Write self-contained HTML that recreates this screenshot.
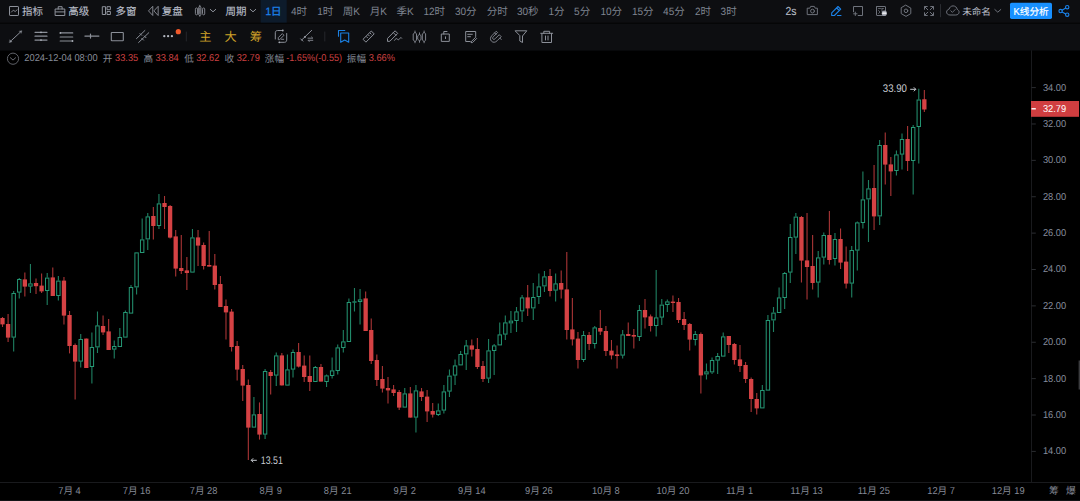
<!DOCTYPE html>
<html lang="zh-CN">
<head>
<meta charset="utf-8">
<title>K线分析</title>
<style>
*{box-sizing:border-box;margin:0;padding:0}
html,body{width:1080px;height:501px;overflow:hidden;background:#000}
body{position:relative;font-family:"Liberation Sans","Noto Sans CJK SC",sans-serif;font-size:10.5px;color:#7c818d}
svg{position:absolute;left:0;top:0}
svg text{font-family:"Liberation Sans","Noto Sans CJK SC",sans-serif;text-rendering:geometricPrecision}
.ax{fill:#868d9e}
.axx{fill:#858a96}
.mk{fill:#c9ccd3}
.pw{fill:#fff}
.tb{fill:#b9bec9;stroke:#b9bec9;stroke-width:.12}
.tf{fill:#7f8490}
.tn{fill:#b9bec9}
.tbl{fill:#1b80e8;stroke:#1b80e8;stroke-width:.3}
.tw{fill:#fff;stroke:#fff;stroke-width:.2}
.gold{fill:#cfa128}
.il{fill:#878c98}
.ir{fill:#cb4042}
.rw{stroke:#d54244;stroke-width:1.1;opacity:.8;fill:none}
.rb{fill:#d54244}
.gw{stroke:#27a07b;stroke-width:1.1;opacity:.8;fill:none}
.gb{fill:none;stroke:#27a07b;stroke-width:1;opacity:.95}
.gf{fill:#27a07b}
</style>
</head>
<body>
<svg id="chart" width="1080" height="501" viewBox="0 0 1080 501">
<rect x="0" y="0" width="1080" height="50.6" fill="#0d0e11"/>
<rect x="0" y="22.7" width="1080" height="1.1" fill="#040506"/>
<rect x="260.7" y="0" width="26" height="22.6" fill="#0d1b2b"/>
<rect x="1010" y="2.8" width="42" height="16.1" rx="1.6" fill="#1890ff"/>
<g id="tbtext" opacity=".999">
<text class="tb" x="22" y="14.9" font-size="10.5">指标</text>
<text class="tb" x="68.3" y="14.9" font-size="10.5">高级</text>
<text class="tb" x="115.4" y="14.9" font-size="10.5">多窗</text>
<text class="tb" x="161.8" y="14.9" font-size="10.5">复盘</text>
<text class="tb" x="225.4" y="14.9" font-size="10.5">周期</text>
<text class="tbl" x="265.4" y="14.9" font-size="10.6" xml:space="preserve"><tspan textLength="5.6" lengthAdjust="spacingAndGlyphs">1</tspan><tspan font-size="10.5">日</tspan></text>
<text class="tf" x="290.9" y="14.9" font-size="10.6" xml:space="preserve"><tspan textLength="5.6" lengthAdjust="spacingAndGlyphs">4</tspan><tspan font-size="10.5">时</tspan></text>
<text class="tf" x="317.2" y="14.9" font-size="10.6" xml:space="preserve"><tspan textLength="5.6" lengthAdjust="spacingAndGlyphs">1</tspan><tspan font-size="10.5">时</tspan></text>
<text class="tf" x="342.7" y="14.9" font-size="10.6" xml:space="preserve"><tspan font-size="10.5">周</tspan><tspan textLength="6.72" lengthAdjust="spacingAndGlyphs">K</tspan></text>
<text class="tf" x="369.7" y="14.9" font-size="10.6" xml:space="preserve"><tspan font-size="10.5">月</tspan><tspan textLength="6.72" lengthAdjust="spacingAndGlyphs">K</tspan></text>
<text class="tf" x="396.4" y="14.9" font-size="10.6" xml:space="preserve"><tspan font-size="10.5">季</tspan><tspan textLength="6.72" lengthAdjust="spacingAndGlyphs">K</tspan></text>
<text class="tf" x="423.4" y="14.9" font-size="10.6" xml:space="preserve"><tspan textLength="11.2" lengthAdjust="spacingAndGlyphs">12</tspan><tspan font-size="10.5">时</tspan></text>
<text class="tf" x="454.9" y="14.9" font-size="10.6" xml:space="preserve"><tspan textLength="11.2" lengthAdjust="spacingAndGlyphs">30</tspan><tspan font-size="10.5">分</tspan></text>
<text class="tf" x="486.7" y="14.9" font-size="10.5">分时</text>
<text class="tf" x="516.9" y="14.9" font-size="10.6" xml:space="preserve"><tspan textLength="11.2" lengthAdjust="spacingAndGlyphs">30</tspan><tspan font-size="10.5">秒</tspan></text>
<text class="tf" x="548.4" y="14.9" font-size="10.6" xml:space="preserve"><tspan textLength="5.6" lengthAdjust="spacingAndGlyphs">1</tspan><tspan font-size="10.5">分</tspan></text>
<text class="tf" x="574.1" y="14.9" font-size="10.6" xml:space="preserve"><tspan textLength="5.6" lengthAdjust="spacingAndGlyphs">5</tspan><tspan font-size="10.5">分</tspan></text>
<text class="tf" x="600.4" y="14.9" font-size="10.6" xml:space="preserve"><tspan textLength="11.2" lengthAdjust="spacingAndGlyphs">10</tspan><tspan font-size="10.5">分</tspan></text>
<text class="tf" x="631.9" y="14.9" font-size="10.6" xml:space="preserve"><tspan textLength="11.2" lengthAdjust="spacingAndGlyphs">15</tspan><tspan font-size="10.5">分</tspan></text>
<text class="tf" x="663.1" y="14.9" font-size="10.6" xml:space="preserve"><tspan textLength="11.2" lengthAdjust="spacingAndGlyphs">45</tspan><tspan font-size="10.5">分</tspan></text>
<text class="tf" x="694.9" y="14.9" font-size="10.6" xml:space="preserve"><tspan textLength="5.6" lengthAdjust="spacingAndGlyphs">2</tspan><tspan font-size="10.5">时</tspan></text>
<text class="tf" x="720.6" y="14.9" font-size="10.6" xml:space="preserve"><tspan textLength="5.6" lengthAdjust="spacingAndGlyphs">3</tspan><tspan font-size="10.5">时</tspan></text>
<text class="tb" x="785.5" y="15.1" font-size="11.6" textLength="11.03" lengthAdjust="spacingAndGlyphs">2s</text>
<text class="tn" x="962.2" y="14.7" font-size="9.6">未命名</text>
<text class="tw" x="1013.6" y="14.8" font-size="10.2" xml:space="preserve"><tspan textLength="6.26" lengthAdjust="spacingAndGlyphs">K</tspan><tspan font-size="9.6">线分析</tspan></text>
<text class="gold" x="199.2" y="41.3" font-size="12.2">主</text>
<text class="gold" x="224.5" y="41.3" font-size="12.2">大</text>
<text class="gold" x="249.7" y="41.3" font-size="12.2">筹</text>
</g>
<g id="info" opacity=".999">
<text class="il" x="24.3" y="61.1" font-size="10.0" textLength="73.43" lengthAdjust="spacingAndGlyphs">2024-12-04 08:00</text>
<text class="il" x="102.8" y="61.5" font-size="9.6">开</text>
<text class="ir" x="115" y="61.1" font-size="10.0" textLength="23.27" lengthAdjust="spacingAndGlyphs">33.35</text>
<text class="il" x="143.5" y="61.5" font-size="9.6">高</text>
<text class="ir" x="155.5" y="61.1" font-size="10.0" textLength="23.27" lengthAdjust="spacingAndGlyphs">33.84</text>
<text class="il" x="184.2" y="61.5" font-size="9.6">低</text>
<text class="ir" x="196.2" y="61.1" font-size="10.0" textLength="23.27" lengthAdjust="spacingAndGlyphs">32.62</text>
<text class="il" x="224.5" y="61.5" font-size="9.6">收</text>
<text class="ir" x="236.7" y="61.1" font-size="10.0" textLength="23.27" lengthAdjust="spacingAndGlyphs">32.79</text>
<text class="il" x="264.8" y="61.5" font-size="9.6">涨幅</text>
<text class="ir" x="286.2" y="61.1" font-size="10.0" textLength="55.94" lengthAdjust="spacingAndGlyphs">-1.65%(-0.55)</text>
<text class="il" x="346.8" y="61.5" font-size="9.6">振幅</text>
<text class="ir" x="368.7" y="61.1" font-size="10.0" textLength="26.37" lengthAdjust="spacingAndGlyphs">3.66%</text>
</g>
<g id="candles">
<path class="rw" d="M2.5 317V327"/>
<rect class="rb" x="0.35" y="318" width="4.3" height="6.4"/>
<path class="rw" d="M8.09 314V342"/>
<rect class="rb" x="5.94" y="324" width="4.3" height="13.6"/>
<path class="gw" d="M13.67 291V293M13.67 337.6V351.6"/>
<rect class="gb" x="11.97" y="293.5" width="3.4" height="43.6"/>
<path class="gw" d="M19.26 278V279M19.26 292.6V298.4"/>
<rect class="gb" x="17.56" y="279.5" width="3.4" height="12.6"/>
<path class="rw" d="M24.85 272.4V296.6"/>
<rect class="rb" x="22.7" y="279.4" width="4.3" height="7.2"/>
<path class="gw" d="M30.43 264V283.4M30.43 286.6V293"/>
<rect class="gb" x="28.73" y="283.9" width="3.4" height="2.2"/>
<path class="rw" d="M36.02 278.6V294"/>
<rect class="rb" x="33.87" y="283" width="4.3" height="3.2"/>
<path class="rw" d="M41.61 273.6V293"/>
<rect class="rb" x="39.46" y="285.6" width="4.3" height="5.8"/>
<path class="gw" d="M47.2 273V277.6M47.2 291V305"/>
<rect class="gb" x="45.5" y="278.1" width="3.4" height="12.4"/>
<path class="rw" d="M52.78 267.4V296"/>
<rect class="rb" x="50.63" y="277.4" width="4.3" height="18.6"/>
<path class="gw" d="M58.37 276V280.6M58.37 296V300.4"/>
<rect class="gb" x="56.67" y="281.1" width="3.4" height="14.4"/>
<path class="rw" d="M63.96 277V324.6"/>
<rect class="rb" x="61.81" y="280.6" width="4.3" height="35"/>
<path class="rw" d="M69.54 311V353.4"/>
<rect class="rb" x="67.39" y="315" width="4.3" height="31"/>
<path class="rw" d="M75.13 343.6V399.6"/>
<rect class="rb" x="72.98" y="345" width="4.3" height="16.6"/>
<path class="gw" d="M80.72 334V339M80.72 361.6V367.6"/>
<rect class="gb" x="79.02" y="339.5" width="3.4" height="21.6"/>
<path class="rw" d="M86.3 338.6V368"/>
<rect class="rb" x="84.15" y="338.6" width="4.3" height="29.4"/>
<path class="gw" d="M91.89 332.6V347M91.89 367V383.4"/>
<rect class="gb" x="90.19" y="347.5" width="3.4" height="19"/>
<path class="gw" d="M97.48 311.4V325.4M97.48 347.4V353"/>
<rect class="gb" x="95.78" y="325.9" width="3.4" height="21"/>
<path class="rw" d="M103.07 315.6V335"/>
<rect class="rb" x="100.92" y="326" width="4.3" height="6.4"/>
<path class="rw" d="M108.65 319V350"/>
<rect class="rb" x="106.5" y="331.4" width="4.3" height="18.6"/>
<path class="gw" d="M114.24 340.4V346M114.24 349.6V358.4"/>
<rect class="gb" x="112.54" y="346.5" width="3.4" height="2.6"/>
<path class="gw" d="M119.83 328V337"/>
<rect class="gb" x="118.13" y="337.5" width="3.4" height="9"/>
<path class="gw" d="M125.41 310.6V312"/>
<rect class="gb" x="123.71" y="312.5" width="3.4" height="24.6"/>
<path class="gw" d="M131 285V287"/>
<rect class="gb" x="129.3" y="287.5" width="3.4" height="25.6"/>
<path class="gw" d="M136.59 287.4V294.4"/>
<rect class="gb" x="134.89" y="252.9" width="3.4" height="34"/>
<path class="gw" d="M142.17 218.6V239.4"/>
<rect class="gb" x="140.47" y="239.9" width="3.4" height="12.6"/>
<path class="gw" d="M147.76 213V216.4M147.76 239.4V250"/>
<rect class="gb" x="146.06" y="216.9" width="3.4" height="22"/>
<path class="rw" d="M153.35 207V239.6"/>
<rect class="rb" x="151.2" y="216" width="4.3" height="10"/>
<path class="gw" d="M158.94 194V203.4M158.94 226V229"/>
<rect class="gb" x="157.24" y="203.9" width="3.4" height="21.6"/>
<path class="rw" d="M164.52 196V229"/>
<rect class="rb" x="162.37" y="203" width="4.3" height="4"/>
<path class="rw" d="M170.11 205V238.4"/>
<rect class="rb" x="167.96" y="206" width="4.3" height="31.6"/>
<path class="rw" d="M175.7 230V276.6"/>
<rect class="rb" x="173.55" y="236.4" width="4.3" height="32.2"/>
<path class="rw" d="M181.28 235V274"/>
<rect class="rb" x="179.13" y="268" width="4.3" height="3"/>
<path class="rw" d="M186.87 257V290"/>
<rect class="rb" x="184.72" y="270.4" width="4.3" height="2.6"/>
<path class="gw" d="M192.46 229V237.4"/>
<rect class="gb" x="190.76" y="237.9" width="3.4" height="34.2"/>
<path class="rw" d="M198.04 230V266"/>
<rect class="rb" x="195.89" y="237.4" width="4.3" height="8.2"/>
<path class="rw" d="M203.63 242.4V269.6"/>
<rect class="rb" x="201.48" y="245" width="4.3" height="21"/>
<path class="rw" d="M209.22 231V266.6"/>
<rect class="rb" x="207.07" y="265" width="4.3" height="1.6"/>
<path class="rw" d="M214.81 254V289.6"/>
<rect class="rb" x="212.66" y="265.6" width="4.3" height="19.4"/>
<path class="rw" d="M220.39 276V307"/>
<rect class="rb" x="218.24" y="284" width="4.3" height="23"/>
<path class="rw" d="M225.98 299.4V339.6"/>
<rect class="rb" x="223.83" y="306" width="4.3" height="6.4"/>
<path class="rw" d="M231.57 309V351.6"/>
<rect class="rb" x="229.42" y="311.6" width="4.3" height="35.4"/>
<path class="rw" d="M237.15 341V380.6"/>
<rect class="rb" x="235" y="346" width="4.3" height="23.6"/>
<path class="rw" d="M242.74 365V401"/>
<rect class="rb" x="240.59" y="369" width="4.3" height="16.6"/>
<path class="rw" d="M248.33 379.4V460"/>
<rect class="rb" x="246.18" y="385" width="4.3" height="42.6"/>
<path class="gw" d="M253.91 397V414.4"/>
<rect class="gb" x="252.21" y="414.9" width="3.4" height="12.2"/>
<path class="rw" d="M259.5 402.4V439.6"/>
<rect class="rb" x="257.35" y="414" width="4.3" height="20.6"/>
<path class="gw" d="M265.09 369V371M265.09 434.6V439"/>
<rect class="gb" x="263.39" y="371.5" width="3.4" height="62.6"/>
<path class="rw" d="M270.68 370V394.6"/>
<rect class="rb" x="268.53" y="372" width="4.3" height="4"/>
<path class="gw" d="M276.26 352.4V355.4M276.26 375.6V386"/>
<rect class="gb" x="274.56" y="355.9" width="3.4" height="19.2"/>
<path class="rw" d="M281.85 353V385.4"/>
<rect class="rb" x="279.7" y="355.4" width="4.3" height="30"/>
<path class="gw" d="M287.44 354.4V369.4"/>
<rect class="gb" x="285.74" y="369.9" width="3.4" height="15.2"/>
<path class="gw" d="M293.02 349.4V352M293.02 369.6V377.4"/>
<rect class="gb" x="291.32" y="352.5" width="3.4" height="16.6"/>
<path class="rw" d="M298.61 343V367.6"/>
<rect class="rb" x="296.46" y="352" width="4.3" height="14.6"/>
<path class="rw" d="M304.2 355.4V382"/>
<rect class="rb" x="302.05" y="365.6" width="4.3" height="11.4"/>
<path class="rw" d="M309.78 355.4V391"/>
<rect class="rb" x="307.63" y="376" width="4.3" height="6"/>
<path class="gw" d="M315.37 366V367"/>
<rect class="gb" x="313.67" y="367.5" width="3.4" height="14"/>
<path class="rw" d="M320.96 364V381.6"/>
<rect class="rb" x="318.81" y="367" width="4.3" height="14.6"/>
<path class="gw" d="M326.55 374.4V375.4M326.55 382V387"/>
<rect class="gb" x="324.85" y="375.9" width="3.4" height="5.6"/>
<path class="gw" d="M332.13 357.4V370.4M332.13 376V378.4"/>
<rect class="gb" x="330.43" y="370.9" width="3.4" height="4.6"/>
<path class="gw" d="M337.72 344.4V347.4M337.72 371V374.4"/>
<rect class="gb" x="336.02" y="347.9" width="3.4" height="22.6"/>
<path class="gw" d="M343.31 330V341.4M343.31 348V352.6"/>
<rect class="gb" x="341.61" y="341.9" width="3.4" height="5.6"/>
<path class="gw" d="M348.89 298.6V302"/>
<rect class="gb" x="347.19" y="302.5" width="3.4" height="39"/>
<path class="gw" d="M354.48 288V301.4M354.48 302.6V311.4"/>
<rect class="gf" x="352.33" y="301.4" width="4.3" height="1.2"/>
<path class="gw" d="M360.07 289V299.4M360.07 302V324.4"/>
<rect class="gb" x="358.37" y="299.9" width="3.4" height="1.6"/>
<path class="rw" d="M365.65 291.6V331"/>
<rect class="rb" x="363.5" y="298.4" width="4.3" height="32.6"/>
<path class="rw" d="M371.24 318.4V364"/>
<rect class="rb" x="369.09" y="330" width="4.3" height="31"/>
<path class="rw" d="M376.83 354.4V386"/>
<rect class="rb" x="374.68" y="360" width="4.3" height="20"/>
<path class="rw" d="M382.42 366V392.4"/>
<rect class="rb" x="380.27" y="379" width="4.3" height="9.6"/>
<path class="rw" d="M388 377V403.6"/>
<rect class="rb" x="385.85" y="388" width="4.3" height="2.4"/>
<path class="rw" d="M393.59 385V396"/>
<rect class="rb" x="391.44" y="389.4" width="4.3" height="3.6"/>
<path class="rw" d="M399.18 390V410"/>
<rect class="rb" x="397.03" y="392" width="4.3" height="15.6"/>
<path class="gw" d="M404.76 388V393.4"/>
<rect class="gb" x="403.06" y="393.9" width="3.4" height="13.2"/>
<path class="rw" d="M410.35 387V417.6"/>
<rect class="rb" x="408.2" y="393.4" width="4.3" height="24.2"/>
<path class="gw" d="M415.94 385V390.4M415.94 417.6V432.4"/>
<rect class="gb" x="414.24" y="390.9" width="3.4" height="26.2"/>
<path class="rw" d="M421.52 388V401"/>
<rect class="rb" x="419.38" y="391.4" width="4.3" height="5.6"/>
<path class="rw" d="M427.11 390V422"/>
<rect class="rb" x="424.96" y="396.6" width="4.3" height="14.8"/>
<path class="rw" d="M432.7 403V417.6"/>
<rect class="rb" x="430.55" y="411" width="4.3" height="3.6"/>
<path class="gw" d="M438.29 403.4V410.4M438.29 415V416"/>
<rect class="gb" x="436.59" y="410.9" width="3.4" height="3.6"/>
<path class="gw" d="M443.87 385V391.4M443.87 410.6V413.6"/>
<rect class="gb" x="442.17" y="391.9" width="3.4" height="18.2"/>
<path class="gw" d="M449.46 369.4V375.6M449.46 391.6V397"/>
<rect class="gb" x="447.76" y="376.1" width="3.4" height="15"/>
<path class="gw" d="M455.05 359.4V365.4M455.05 375.6V385"/>
<rect class="gb" x="453.35" y="365.9" width="3.4" height="9.2"/>
<path class="gw" d="M460.63 351V354"/>
<rect class="gb" x="458.93" y="354.5" width="3.4" height="10.4"/>
<path class="gw" d="M466.22 340V345.4M466.22 354.4V370"/>
<rect class="gb" x="464.52" y="345.9" width="3.4" height="8"/>
<path class="rw" d="M471.81 339.4V356.4"/>
<rect class="rb" x="469.66" y="345.4" width="4.3" height="4.2"/>
<path class="rw" d="M477.39 338V369"/>
<rect class="rb" x="475.25" y="349" width="4.3" height="18"/>
<path class="rw" d="M482.98 361V382"/>
<rect class="rb" x="480.83" y="366" width="4.3" height="13"/>
<path class="gw" d="M488.57 339V350.4M488.57 378.6V383"/>
<rect class="gb" x="486.87" y="350.9" width="3.4" height="27.2"/>
<path class="gw" d="M494.16 344V345.4M494.16 351V375"/>
<rect class="gb" x="492.46" y="345.9" width="3.4" height="4.6"/>
<path class="gw" d="M499.74 322.4V334.4"/>
<rect class="gb" x="498.04" y="334.9" width="3.4" height="10"/>
<path class="gw" d="M505.33 315.4V322.4M505.33 334.6V340"/>
<rect class="gb" x="503.63" y="322.9" width="3.4" height="11.2"/>
<path class="gw" d="M510.92 311V320.6M510.92 323.4V333"/>
<rect class="gb" x="509.22" y="321.1" width="3.4" height="1.8"/>
<path class="gw" d="M516.5 307V311.4M516.5 321V332"/>
<rect class="gb" x="514.8" y="311.9" width="3.4" height="8.6"/>
<path class="gw" d="M522.09 295V297.4M522.09 311.4V322"/>
<rect class="gb" x="520.39" y="297.9" width="3.4" height="13"/>
<path class="rw" d="M527.68 285V316"/>
<rect class="rb" x="525.53" y="297.4" width="4.3" height="11"/>
<path class="gw" d="M533.26 283V297M533.26 308.4V320"/>
<rect class="gb" x="531.57" y="297.5" width="3.4" height="10.4"/>
<path class="gw" d="M538.85 273.4V286.4M538.85 297V304"/>
<rect class="gb" x="537.15" y="286.9" width="3.4" height="9.6"/>
<path class="gw" d="M544.44 271V276.4M544.44 286.4V292"/>
<rect class="gb" x="542.74" y="276.9" width="3.4" height="9"/>
<path class="rw" d="M550.03 269V296.6"/>
<rect class="rb" x="547.88" y="276" width="4.3" height="15"/>
<path class="gw" d="M555.61 273.4V283.4M555.61 290.6V301.6"/>
<rect class="gb" x="553.91" y="283.9" width="3.4" height="6.2"/>
<path class="rw" d="M561.2 270.6V298.6"/>
<rect class="rb" x="559.05" y="283" width="4.3" height="6.6"/>
<path class="rw" d="M566.79 252V339.4"/>
<rect class="rb" x="564.64" y="289.4" width="4.3" height="40.6"/>
<path class="rw" d="M572.37 298V345.4"/>
<rect class="rb" x="570.22" y="329.4" width="4.3" height="10"/>
<path class="rw" d="M577.96 332V368.6"/>
<rect class="rb" x="575.81" y="338.6" width="4.3" height="21.4"/>
<path class="gw" d="M583.55 331V335M583.55 360V362"/>
<rect class="gb" x="581.85" y="335.5" width="3.4" height="24"/>
<path class="rw" d="M589.13 332V350"/>
<rect class="rb" x="586.99" y="335" width="4.3" height="9"/>
<path class="gw" d="M594.72 326V327.4M594.72 344V348.4"/>
<rect class="gb" x="593.02" y="327.9" width="3.4" height="15.6"/>
<path class="rw" d="M600.31 310V335"/>
<rect class="rb" x="598.16" y="328" width="4.3" height="3.6"/>
<path class="rw" d="M605.9 326V356"/>
<rect class="rb" x="603.75" y="331" width="4.3" height="20"/>
<path class="rw" d="M611.48 340V359.4"/>
<rect class="rb" x="609.33" y="350.6" width="4.3" height="4.8"/>
<path class="rw" d="M617.07 345.4V368.4"/>
<rect class="rb" x="614.92" y="354.4" width="4.3" height="1.6"/>
<path class="gw" d="M622.66 330V334.4M622.66 355.6V358.6"/>
<rect class="gb" x="620.96" y="334.9" width="3.4" height="20.2"/>
<path class="rw" d="M628.24 322.6V336"/>
<rect class="rb" x="626.09" y="334" width="4.3" height="2"/>
<path class="rw" d="M633.83 329V348.4"/>
<rect class="rb" x="631.68" y="335" width="4.3" height="1.6"/>
<path class="gw" d="M639.42 305V310M639.42 337V341"/>
<rect class="gb" x="637.72" y="310.5" width="3.4" height="26"/>
<path class="rw" d="M645 299V328.6"/>
<rect class="rb" x="642.86" y="310" width="4.3" height="7.4"/>
<path class="rw" d="M650.59 314.4V331.6"/>
<rect class="rb" x="648.44" y="316.4" width="4.3" height="9.6"/>
<path class="gw" d="M656.18 270V317.4M656.18 326V336.4"/>
<rect class="gb" x="654.48" y="317.9" width="3.4" height="7.6"/>
<path class="gw" d="M661.77 299V304.6M661.77 317.6V325"/>
<rect class="gb" x="660.07" y="305.1" width="3.4" height="12"/>
<path class="gw" d="M667.35 299.4V301.4M667.35 305V312"/>
<rect class="gb" x="665.65" y="301.9" width="3.4" height="2.6"/>
<path class="rw" d="M672.94 295.6V312"/>
<rect class="rb" x="670.79" y="301.6" width="4.3" height="1.4"/>
<path class="rw" d="M678.53 298V323"/>
<rect class="rb" x="676.38" y="302" width="4.3" height="18"/>
<path class="rw" d="M684.11 312V330"/>
<rect class="rb" x="681.96" y="319" width="4.3" height="6"/>
<path class="rw" d="M689.7 323V350.4"/>
<rect class="rb" x="687.55" y="324" width="4.3" height="15.6"/>
<path class="gw" d="M695.29 331V334M695.29 340V345.4"/>
<rect class="gb" x="693.59" y="334.5" width="3.4" height="5"/>
<path class="rw" d="M700.88 332.4V393.6"/>
<rect class="rb" x="698.73" y="334" width="4.3" height="41.4"/>
<path class="gw" d="M706.46 363.4V371.4M706.46 374.4V379.6"/>
<rect class="gb" x="704.76" y="371.9" width="3.4" height="2"/>
<path class="gw" d="M712.05 357.4V360M712.05 372.4V374"/>
<rect class="gb" x="710.35" y="360.5" width="3.4" height="11.4"/>
<path class="gw" d="M717.64 353V356M717.64 360.6V374"/>
<rect class="gb" x="715.94" y="356.5" width="3.4" height="3.6"/>
<path class="gw" d="M723.22 332.6V336.4"/>
<rect class="gb" x="721.52" y="336.9" width="3.4" height="19.2"/>
<path class="rw" d="M728.81 336V353"/>
<rect class="rb" x="726.66" y="336" width="4.3" height="9"/>
<path class="rw" d="M734.4 343V364.6"/>
<rect class="rb" x="732.25" y="344" width="4.3" height="16"/>
<path class="rw" d="M739.98 345V372"/>
<rect class="rb" x="737.83" y="359.4" width="4.3" height="6.6"/>
<path class="rw" d="M745.57 362V383"/>
<rect class="rb" x="743.42" y="365" width="4.3" height="14"/>
<path class="rw" d="M751.16 377.4V412"/>
<rect class="rb" x="749.01" y="379" width="4.3" height="20"/>
<path class="rw" d="M756.75 393V414.4"/>
<rect class="rb" x="754.6" y="399" width="4.3" height="9.4"/>
<path class="gw" d="M762.33 385V390"/>
<rect class="gb" x="760.63" y="390.5" width="3.4" height="17.4"/>
<path class="gw" d="M767.92 315V320"/>
<rect class="gb" x="766.22" y="320.5" width="3.4" height="69.6"/>
<path class="gw" d="M773.51 307V312.6M773.51 320.4V332"/>
<rect class="gb" x="771.81" y="313.1" width="3.4" height="6.8"/>
<path class="gw" d="M779.09 287.4V297.4"/>
<rect class="gb" x="777.39" y="297.9" width="3.4" height="14.6"/>
<path class="gw" d="M784.68 272V273M784.68 298V309"/>
<rect class="gb" x="782.98" y="273.5" width="3.4" height="24"/>
<path class="gw" d="M790.27 224V237M790.27 272.6V283"/>
<rect class="gb" x="788.57" y="237.5" width="3.4" height="34.6"/>
<path class="gw" d="M795.85 213V216.6M795.85 237.6V254"/>
<rect class="gb" x="794.15" y="217.1" width="3.4" height="20"/>
<path class="rw" d="M801.44 216V282.6"/>
<rect class="rb" x="799.29" y="217" width="4.3" height="43.6"/>
<path class="rw" d="M807.03 213V299.6"/>
<rect class="rb" x="804.88" y="260.4" width="4.3" height="6.6"/>
<path class="rw" d="M812.62 235V289.4"/>
<rect class="rb" x="810.47" y="266" width="4.3" height="17"/>
<path class="gw" d="M818.2 251V257.4M818.2 282.6V297.4"/>
<rect class="gb" x="816.5" y="257.9" width="3.4" height="24.2"/>
<path class="gw" d="M823.79 232.4V235M823.79 257.6V264.4"/>
<rect class="gb" x="822.09" y="235.5" width="3.4" height="21.6"/>
<path class="rw" d="M829.38 211V264.4"/>
<rect class="rb" x="827.23" y="235" width="4.3" height="25"/>
<path class="gw" d="M834.96 233V239M834.96 259V265.6"/>
<rect class="gb" x="833.26" y="239.5" width="3.4" height="19"/>
<path class="rw" d="M840.55 228.6V269"/>
<rect class="rb" x="838.4" y="239" width="4.3" height="23.6"/>
<path class="rw" d="M846.14 246.4V288.6"/>
<rect class="rb" x="843.99" y="261.6" width="4.3" height="22"/>
<path class="gw" d="M851.72 246V250M851.72 283.6V297.4"/>
<rect class="gb" x="850.02" y="250.5" width="3.4" height="32.6"/>
<path class="gw" d="M857.31 221.4V222.4M857.31 250.6V270.4"/>
<rect class="gb" x="855.61" y="222.9" width="3.4" height="27.2"/>
<path class="gw" d="M862.9 171.4V199.4M862.9 223V228.6"/>
<rect class="gb" x="861.2" y="199.9" width="3.4" height="22.6"/>
<path class="gw" d="M868.49 180V188.4M868.49 199.4V242"/>
<rect class="gb" x="866.79" y="188.9" width="3.4" height="10"/>
<path class="rw" d="M874.07 165V230"/>
<rect class="rb" x="871.92" y="188" width="4.3" height="28.4"/>
<path class="gw" d="M879.66 140V145M879.66 216.4V225"/>
<rect class="gb" x="877.96" y="145.5" width="3.4" height="70.4"/>
<path class="rw" d="M885.25 132.4V184.4"/>
<rect class="rb" x="883.1" y="145" width="4.3" height="19.6"/>
<path class="rw" d="M890.83 157V196"/>
<rect class="rb" x="888.68" y="164.4" width="4.3" height="7"/>
<path class="gw" d="M896.42 150.4V154.4M896.42 171V175.6"/>
<rect class="gb" x="894.72" y="154.9" width="3.4" height="15.6"/>
<path class="gw" d="M902.01 133.4V139M902.01 154.6V169.4"/>
<rect class="gb" x="900.31" y="139.5" width="3.4" height="14.6"/>
<path class="rw" d="M907.59 126V171"/>
<rect class="rb" x="905.44" y="139" width="4.3" height="22"/>
<path class="gw" d="M913.18 125V127M913.18 161V194.4"/>
<rect class="gb" x="911.48" y="127.5" width="3.4" height="33"/>
<path class="gw" d="M918.77 88.75V99.5M918.77 127V163.4"/>
<rect class="gb" x="917.07" y="100" width="3.4" height="26.5"/>
<path class="rw" d="M924.35 90V112"/>
<rect class="rb" x="922.2" y="99.25" width="4.3" height="10.25"/>
</g>
<path d="M1031.5 50.3V482.5" stroke="#191a1d" stroke-width="1"/>
<path d="M0 482.5H1080" stroke="#191a1d" stroke-width="1"/>
<path d="M0 500.5H1080" stroke="#131416" stroke-width="1"/>
<g id="yaxis" opacity=".999">
<path d="M1031.5 87.6h4.3" stroke="#2b2d31" stroke-width="1"/>
<text class="ax" x="1042.9" y="90.5" font-size="10.0" textLength="23.27" lengthAdjust="spacingAndGlyphs">34.00</text>
<path d="M1031.5 123.98h4.3" stroke="#2b2d31" stroke-width="1"/>
<text class="ax" x="1042.9" y="126.88" font-size="10.0" textLength="23.27" lengthAdjust="spacingAndGlyphs">32.00</text>
<path d="M1031.5 160.36h4.3" stroke="#2b2d31" stroke-width="1"/>
<text class="ax" x="1042.9" y="163.26" font-size="10.0" textLength="23.27" lengthAdjust="spacingAndGlyphs">30.00</text>
<path d="M1031.5 196.74h4.3" stroke="#2b2d31" stroke-width="1"/>
<text class="ax" x="1042.9" y="199.64" font-size="10.0" textLength="23.27" lengthAdjust="spacingAndGlyphs">28.00</text>
<path d="M1031.5 233.12h4.3" stroke="#2b2d31" stroke-width="1"/>
<text class="ax" x="1042.9" y="236.02" font-size="10.0" textLength="23.27" lengthAdjust="spacingAndGlyphs">26.00</text>
<path d="M1031.5 269.5h4.3" stroke="#2b2d31" stroke-width="1"/>
<text class="ax" x="1042.9" y="272.4" font-size="10.0" textLength="23.27" lengthAdjust="spacingAndGlyphs">24.00</text>
<path d="M1031.5 305.88h4.3" stroke="#2b2d31" stroke-width="1"/>
<text class="ax" x="1042.9" y="308.78" font-size="10.0" textLength="23.27" lengthAdjust="spacingAndGlyphs">22.00</text>
<path d="M1031.5 342.26h4.3" stroke="#2b2d31" stroke-width="1"/>
<text class="ax" x="1042.9" y="345.16" font-size="10.0" textLength="23.27" lengthAdjust="spacingAndGlyphs">20.00</text>
<path d="M1031.5 378.64h4.3" stroke="#2b2d31" stroke-width="1"/>
<text class="ax" x="1042.9" y="381.54" font-size="10.0" textLength="23.27" lengthAdjust="spacingAndGlyphs">18.00</text>
<path d="M1031.5 415.02h4.3" stroke="#2b2d31" stroke-width="1"/>
<text class="ax" x="1042.9" y="417.92" font-size="10.0" textLength="23.27" lengthAdjust="spacingAndGlyphs">16.00</text>
<path d="M1031.5 451.4h4.3" stroke="#2b2d31" stroke-width="1"/>
<text class="ax" x="1042.9" y="454.3" font-size="10.0" textLength="23.27" lengthAdjust="spacingAndGlyphs">14.00</text>
</g>
<g id="xaxis" opacity=".999">
<text class="axx" x="58.28" y="494.2" font-size="10.0" xml:space="preserve"><tspan textLength="5.17" lengthAdjust="spacingAndGlyphs">7</tspan><tspan font-size="9.6">月</tspan><tspan textLength="7.76" lengthAdjust="spacingAndGlyphs"> 4</tspan></text>
<text class="axx" x="122.74" y="494.2" font-size="10.0" xml:space="preserve"><tspan textLength="5.17" lengthAdjust="spacingAndGlyphs">7</tspan><tspan font-size="9.6">月</tspan><tspan textLength="12.93" lengthAdjust="spacingAndGlyphs"> 16</tspan></text>
<text class="axx" x="189.78" y="494.2" font-size="10.0" xml:space="preserve"><tspan textLength="5.17" lengthAdjust="spacingAndGlyphs">7</tspan><tspan font-size="9.6">月</tspan><tspan textLength="12.93" lengthAdjust="spacingAndGlyphs"> 28</tspan></text>
<text class="axx" x="259.41" y="494.2" font-size="10.0" xml:space="preserve"><tspan textLength="5.17" lengthAdjust="spacingAndGlyphs">8</tspan><tspan font-size="9.6">月</tspan><tspan textLength="7.76" lengthAdjust="spacingAndGlyphs"> 9</tspan></text>
<text class="axx" x="323.87" y="494.2" font-size="10.0" xml:space="preserve"><tspan textLength="5.17" lengthAdjust="spacingAndGlyphs">8</tspan><tspan font-size="9.6">月</tspan><tspan textLength="12.93" lengthAdjust="spacingAndGlyphs"> 21</tspan></text>
<text class="axx" x="393.5" y="494.2" font-size="10.0" xml:space="preserve"><tspan textLength="5.17" lengthAdjust="spacingAndGlyphs">9</tspan><tspan font-size="9.6">月</tspan><tspan textLength="7.76" lengthAdjust="spacingAndGlyphs"> 2</tspan></text>
<text class="axx" x="457.96" y="494.2" font-size="10.0" xml:space="preserve"><tspan textLength="5.17" lengthAdjust="spacingAndGlyphs">9</tspan><tspan font-size="9.6">月</tspan><tspan textLength="12.93" lengthAdjust="spacingAndGlyphs"> 14</tspan></text>
<text class="axx" x="525" y="494.2" font-size="10.0" xml:space="preserve"><tspan textLength="5.17" lengthAdjust="spacingAndGlyphs">9</tspan><tspan font-size="9.6">月</tspan><tspan textLength="12.93" lengthAdjust="spacingAndGlyphs"> 26</tspan></text>
<text class="axx" x="592.05" y="494.2" font-size="10.0" xml:space="preserve"><tspan textLength="10.34" lengthAdjust="spacingAndGlyphs">10</tspan><tspan font-size="9.6">月</tspan><tspan textLength="7.76" lengthAdjust="spacingAndGlyphs"> 8</tspan></text>
<text class="axx" x="656.5" y="494.2" font-size="10.0" xml:space="preserve"><tspan textLength="10.34" lengthAdjust="spacingAndGlyphs">10</tspan><tspan font-size="9.6">月</tspan><tspan textLength="12.93" lengthAdjust="spacingAndGlyphs"> 20</tspan></text>
<text class="axx" x="726.13" y="494.2" font-size="10.0" xml:space="preserve"><tspan textLength="9.65" lengthAdjust="spacingAndGlyphs">11</tspan><tspan font-size="9.6">月</tspan><tspan textLength="7.76" lengthAdjust="spacingAndGlyphs"> 1</tspan></text>
<text class="axx" x="790.59" y="494.2" font-size="10.0" xml:space="preserve"><tspan textLength="9.65" lengthAdjust="spacingAndGlyphs">11</tspan><tspan font-size="9.6">月</tspan><tspan textLength="12.93" lengthAdjust="spacingAndGlyphs"> 13</tspan></text>
<text class="axx" x="857.64" y="494.2" font-size="10.0" xml:space="preserve"><tspan textLength="9.65" lengthAdjust="spacingAndGlyphs">11</tspan><tspan font-size="9.6">月</tspan><tspan textLength="12.93" lengthAdjust="spacingAndGlyphs"> 25</tspan></text>
<text class="axx" x="927.27" y="494.2" font-size="10.0" xml:space="preserve"><tspan textLength="10.34" lengthAdjust="spacingAndGlyphs">12</tspan><tspan font-size="9.6">月</tspan><tspan textLength="7.76" lengthAdjust="spacingAndGlyphs"> 7</tspan></text>
<text class="axx" x="991.72" y="494.2" font-size="10.0" xml:space="preserve"><tspan textLength="10.34" lengthAdjust="spacingAndGlyphs">12</tspan><tspan font-size="9.6">月</tspan><tspan textLength="12.93" lengthAdjust="spacingAndGlyphs"> 19</tspan></text>
<text x="1049" y="494.4" class="axx" font-size="9.8">筹</text>
<text x="1066" y="494.4" class="axx" font-size="9.8">爆</text>
</g>
<rect x="1031" y="101" width="48" height="15.8" fill="#d03e40"/>
<path d="M1031.5 108.8h4.3" stroke="#fff" stroke-width="1.4"/>
<path d="M910.2 89.3h5.6m-2-2l2 2-2 2" stroke="#c9ccd3" stroke-width="1" fill="none"/>
<path d="M256.8 460.3h-5.6m2-2l-2 2 2 2" stroke="#c9ccd3" stroke-width="1" fill="none"/>
<rect x="1078.6" y="360.5" width="1.4" height="29" fill="#3a3b3e"/>
<circle cx="13" cy="58.7" r="5.6" fill="none" stroke="#5f6168" stroke-width="1"/>
<path d="M10.1 57.5l2.9 2.6 2.9-2.6" fill="none" stroke="#6b6d74" stroke-width="1"/>
<g id="marks" opacity=".999">
<text class="mk" x="882.8" y="92.3" font-size="11" textLength="24.09" lengthAdjust="spacingAndGlyphs">33.90</text>
<text class="mk" x="260.8" y="463.9" font-size="11" textLength="22.02" lengthAdjust="spacingAndGlyphs">13.51</text>
<text class="pw" x="1042.9" y="111.9" font-size="10.0" textLength="23.27" lengthAdjust="spacingAndGlyphs">32.79</text>
</g>
</svg>
<svg id="icons" width="1080" height="50" viewBox="0 0 1080 50" style="position:absolute;left:0;top:0" fill="none" stroke-linecap="round" stroke-linejoin="round">
<g stroke="#8d919a" stroke-width="1">
<!-- row1 left -->
<rect x="9.5" y="6.5" width="9" height="9" rx=".6"/>
<path d="M11.4 12.1l1.9-1.9 1.9 1.3 1.9-1.7" stroke-width=".9"/>
<path d="M55.5 9h9.3v6.5h-9.3zM58.2 9V6.7h3.9V9M55.5 11.9h9.3"/>
<path d="M102.7 6.7h2.8v7.8h-2.8zM107.4 6.7h3v3h-3zM107.4 11.5h3v3h-3z"/>
<path d="M152.5 6.6l-4 4.3 4 4.3zM157.9 6.6l-4 4.3 4 4.3z" stroke-width=".9"/>
<path d="M195.4 8.9c0-.5.4-.9.9-.9h.4c.5 0 .9.4.9.9v5c0 .5-.4.9-.9.9h-.4c-.5 0-.9-.4-.9-.9zM198.7 7.3c0-.5.4-.9.9-.9h.4c.5 0 .9.4.9.9v7.2c0 .5-.4.9-.9.9h-.4c-.5 0-.9-.4-.9-.9zM199.8 5.3v1.1M199.8 15.4v.9M199.8 8v5.5M202.5 8.9c0-.5.4-.9.9-.9h.4c.5 0 .9.4.9.9v5c0 .5-.4.9-.9.9h-.4c-.5 0-.9-.4-.9-.9z" stroke-width=".9"/>
<path d="M210.3 9.4l2.7 2.4 2.7-2.4M250.3 9.4l2.7 2.4 2.7-2.4"/>
</g>
<g stroke="#6e727b" stroke-width="1">
<!-- row1 right -->
<path d="M807.6 8.2h2.2l.9-1.8h3.6l.9 1.8h2.2v6.4h-9.8z"/>
<circle cx="812.5" cy="11.1" r="1.9"/>
<path d="M853.5 11.8V6.5h9v9h-4.3M853.6 13.8h3.4M855.3 12.1v3.4"/>
<rect x="876.5" y="6.5" width="9" height="9" rx=".4"/>
<path d="M878.5 8.5h2M882 8.5h1.5M878.5 10.5l1.5 1.5-1.5 1.5M882 8.5v3" stroke-width=".8"/>
<path d="M906 5.3l4.8 2.8v5.5l-4.8 2.8-4.8-2.8V8.1z"/>
<circle cx="906" cy="10.8" r="1.8"/>
<path d="M924.5 9.3V6.5h2.8M924.8 6.8l3 3M933.5 9.3V6.5h-2.8M933.2 6.8l-3 3M924.5 12.7v2.8h2.8M924.8 15.2l3-3M933.5 12.7v2.8h-2.8M933.2 15.2l-3-3"/>
<path d="M949.6 15c-1.7 0-3-1.3-3-2.9 0-1.5 1.1-2.7 2.5-2.9.4-1.9 2-3.3 4-3.3 2.1 0 3.8 1.5 4.1 3.5 1.1.4 1.9 1.5 1.9 2.7 0 1.6-1.3 2.9-2.9 2.9z"/>
<path d="M950.8 10.8l1.6 1.6 2.8-2.9" stroke-width=".9"/>
<path d="M994.8 9.5l3 2.7 3-2.7"/>
</g>
<circle cx="884.3" cy="13.2" r="2.6" fill="#a5a8b3"/>
<path d="M882.8 13.2h3" stroke="#fff" stroke-width="1.2"/>
<path d="M940.5 4.5v12.3" stroke="#2a2c31" stroke-width="1"/>
<g stroke="#1b83ea" stroke-width="1.1">
<path d="M831.7 15.5v-2.7l6.3-6.3 2.7 2.7-6.3 6.3zM836.7 8l2.5 2.5M837.5 15.5h3.5"/>
<circle cx="1060.6" cy="11.1" r="1.7"/><circle cx="1067.2" cy="7.2" r="1.7"/><circle cx="1067.2" cy="14.7" r="1.7"/>
<path d="M1062.1 10.2l3.6-2.1M1062.1 12l3.6 1.9"/>
</g>
<!-- row2 -->
<g stroke="#8b8f98" stroke-width="1">
<path d="M11.5 40.4l8.5-7.9"/>
<path d="M10 40l2.1 1.7-2.5.8zM19.4 31.2l2.5-.5-.7 2.4z" fill="#8b8f98" stroke-width=".4"/>
<path d="M35 32.3h12M35 36.2h12M35 40.1h12" stroke-width="1.2"/>
<circle cx="41" cy="32.3" r=".9" fill="#a9adb6" stroke="none"/><circle cx="41" cy="40.1" r=".9" fill="#a9adb6" stroke="none"/>
<path d="M60.4 32.9h12.3M60.2 37h12.5M60.2 41h12.3" stroke-width="1.2"/><circle cx="60.4" cy="32.9" r=".9" fill="#a9adb6" stroke="none"/><circle cx="72.5" cy="41" r=".9" fill="#a9adb6" stroke="none"/>
<path d="M84.9 36.1h14M90.5 34.2v3.9" stroke-width="1.2"/>
<rect x="111.3" y="32.5" width="12" height="8.3" rx=".6" stroke-width="1.1"/>
<path d="M136.5 38.6l8.4-8.1M138.6 42.5l10.2-9.8M140 33.6l1.7 1.7M144.3 36l1.7 1.7M141.8 38.4l1.7 1.7"/>
<circle cx="164.3" cy="36.2" r="1.15" fill="#b4b8c2" stroke="none"/><circle cx="168.1" cy="36.2" r="1.15" fill="#b4b8c2" stroke="none"/><circle cx="171.9" cy="36.2" r="1.15" fill="#b4b8c2" stroke="none"/>
<path d="M282.5 30.5h-5c-1.3 0-2.2.9-2.2 2.2v6.3M279.5 42.3h5c1.3 0 2.2-.9 2.2-2.2v-6.6"/>
<circle cx="282.8" cy="30.5" r=".9" fill="#a9adb6" stroke="none"/><circle cx="279.3" cy="42.3" r=".9" fill="#a9adb6" stroke="none"/>
<path d="M278.3 39.3v-1.7l4-4 1.7 1.7-4 4zM281.5 39.3h2.2" stroke-width=".9"/>
<path d="M301.8 39.9l9.8-9.5M300.7 38.9l2.2 2.2"/>
<circle cx="305" cy="36.9" r=".9" fill="#a9adb6" stroke="none"/>
<path d="M308 38.2h4.8l-1.2-1.2M312.8 40.3h-4.8l1.2 1.2" stroke-width=".9"/>
<path d="M363.3 39l8-8 2.9 2.9-8 8zM366.5 36.7l1 1M368.3 34.9l1 1M370.1 33.1l1 1" stroke-width="1"/>
<path d="M387.5 41v-2.6l7.6-7.6 2.6 2.6-7.6 7.6zM393.3 32.6l2.6 2.6M394.5 40.3c1-1.7 2-2.2 2.8-1.2s1.7.8 2.5-.6 1.5-1 1.9-.4" stroke-width="1"/>
<path d="M413.5 33.7l1.5-1.3 1.5 1.3v6.6l-1.5 1.3-1.5-1.3zM415 31v1.4M415 41.6v1.2M418 35.6l1.5-1.3 1.5 1.3v3.9l-1.5 1.3-1.5-1.3zM419.5 32.8v1.5M419.5 40.8v1.5M422.6 33.7l1.5-1.3 1.5 1.3v6.6l-1.5 1.3-1.5-1.3zM424.1 31v1.4M424.1 41.6v1.2" stroke-width=".9"/>
<path d="M441.7 34h7.6v7.4h-7.6zM443.8 34v-2.5h3.2M445.5 36.8v1.8" stroke-width="1"/>
<path d="M475.7 36.5v-5h-10v10h4.5M467.7 34.3h4.6M467.7 36.7h2.8M471.4 41.5l4.1-4.1 1.1 1.1-4.1 4.1h-1.1z" stroke-width="1"/>
<path d="M496 31.5l-4 4c-2 2-2 4.2-.5 5.7s3.7 1.5 5.7-.5l4-4-2-2-4 4c-.8.8-1.6.9-2.2.3s-.5-1.4.3-2.2l4-4zM494.6 32.9l1.4 1.4M499.8 38.1l1.4 1.4" stroke-width=".9"/>
<path d="M515.5 30.8h11.3l-4.3 5.2v6.5l-2.7-1.5v-5z" stroke-width="1"/>
<path d="M540.7 33.3h12M543.8 33.3v-2h5.8v2M541.9 33.5v9h9.6v-9M545.5 36v4M548 36v4" stroke-width="1"/>
</g>
<g stroke="#1b80e2" stroke-width="1.1">
<path d="M340.7 33h8v9.3l-4-2.3-4 2.3z"/>
<path d="M338.5 36.3V30.5h6.3"/>
</g>
<circle cx="178.3" cy="31.7" r="2.6" fill="#f1592a"/>
<path d="M186.3 32v9M324.8 32v9" stroke="#25272c" stroke-width="1"/>
</svg>

</body>
</html>
